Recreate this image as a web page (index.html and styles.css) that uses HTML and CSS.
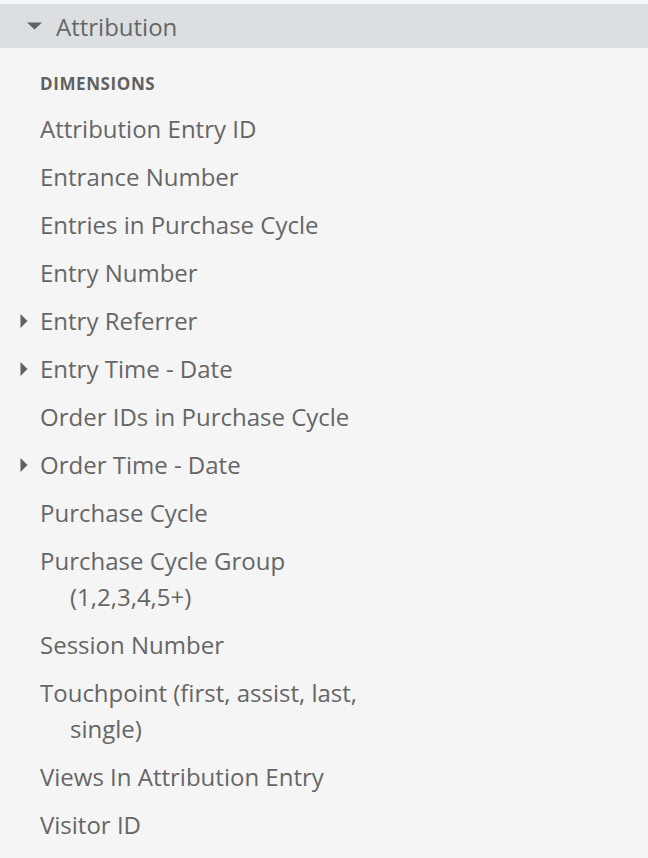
FILE: index.html
```html
<!DOCTYPE html>
<html>
<head>
<meta charset="utf-8">
<link rel="stylesheet" href="styles.css">
</head>
<body>
<div class="panel">
  <div class="group-header">
    <svg class="caret-down" width="15" height="8" viewBox="0 0 15 8"><path d="M0 0.5 L15 0.5 L7.5 7.5 Z" fill="#616161"/></svg>
    <span class="group-title">Attribution</span>
  </div>
  <div class="section-label">DIMENSIONS</div>
  <ul class="field-list">
    <li class="field"><span class="field-text">Attribution Entry ID</span></li>
    <li class="field"><span class="field-text">Entrance Number</span></li>
    <li class="field"><span class="field-text">Entries in Purchase Cycle</span></li>
    <li class="field"><span class="field-text">Entry Number</span></li>
    <li class="field has-children"><svg class="caret-right" width="8" height="14" viewBox="0 0 8 14"><path d="M0.5 0 L7.5 7 L0.5 14 Z" fill="#616161"/></svg><span class="field-text">Entry Referrer</span></li>
    <li class="field has-children"><svg class="caret-right" width="8" height="14" viewBox="0 0 8 14"><path d="M0.5 0 L7.5 7 L0.5 14 Z" fill="#616161"/></svg><span class="field-text">Entry Time - Date</span></li>
    <li class="field"><span class="field-text">Order IDs in Purchase Cycle</span></li>
    <li class="field has-children"><svg class="caret-right" width="8" height="14" viewBox="0 0 8 14"><path d="M0.5 0 L7.5 7 L0.5 14 Z" fill="#616161"/></svg><span class="field-text">Order Time - Date</span></li>
    <li class="field"><span class="field-text">Purchase Cycle</span></li>
    <li class="field"><span class="field-text">Purchase Cycle Group (1,2,3,4,5+)</span></li>
    <li class="field"><span class="field-text">Session Number</span></li>
    <li class="field"><span class="field-text">Touchpoint (first, assist, last, single)</span></li>
    <li class="field"><span class="field-text">Views In Attribution Entry</span></li>
    <li class="field"><span class="field-text">Visitor ID</span></li>
  </ul>
</div>
</body>
</html>
```
FILE: styles.css
```css
html, body {
  margin: 0;
  padding: 0;
  background: #f5f5f5;
}
body {
  font-family: "Open Sans", "Liberation Sans", sans-serif;
  color: #666666;
}
.panel {
  padding-top: 4px;
}
.group-header {
  height: 44px;
  background: #dcdfe1;
  display: flex;
  align-items: center;
}
.caret-down {
  margin-left: 27px;
  margin-right: 14px;
}
.group-title {
  font-size: 24px;
  color: #666666;
}
.section-label {
  font-size: 17px;
  font-weight: 700;
  letter-spacing: 0.6px;
  color: #616161;
  padding-left: 40px;
  margin-top: 24px;
  line-height: 24px;
  height: 24px;
}
.field-list {
  list-style: none;
  margin: 0;
  padding: 0;
  margin-top: 9px;
}
.field {
  position: relative;
  padding: 6px 0 6px 40px;
  width: 345px;
}
.field-text {
  display: block;
  font-size: 24px;
  line-height: 36px;
  padding-left: 30px;
  text-indent: -30px;
}
.caret-right {
  position: absolute;
  left: 20px;
  top: 17px;
}
```
